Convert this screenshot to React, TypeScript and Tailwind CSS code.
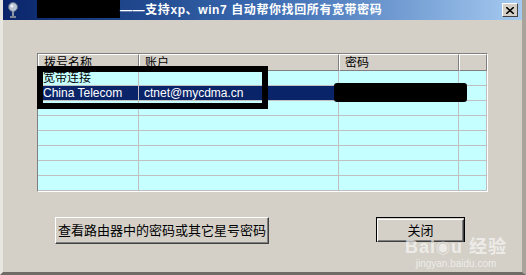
import React from 'react';

const font = { fontFamily: '"Liberation Sans", "Noto Sans CJK SC", sans-serif' };

const cols = ['w-[101px]', 'w-[200px]', 'w-[120px]', 'flex-1'];

const rows: { cells: string[]; selected?: boolean }[] = [
  { cells: ['宽带连接', '', '', ''] },
  { cells: ['China Telecom', 'ctnet@mycdma.cn', '', ''], selected: true },
  { cells: ['', '', '', ''] },
  { cells: ['', '', '', ''] },
  { cells: ['', '', '', ''] },
  { cells: ['', '', '', ''] },
  { cells: ['', '', '', ''] },
  { cells: ['', '', '', ''] },
];

export default function App() {
  return (
    <div className="relative w-[526px] h-[275px] overflow-hidden bg-[#d4d0c8] flex flex-col border-l-[3px] border-l-[#e8e6e0] border-r-[4px] border-r-[#a8a49c] border-b-[3px] border-b-[#6f6c66]" style={font}>
      {/* Title bar */}
      <div className="relative h-[20px] flex items-center bg-gradient-to-r from-[#0a246a] via-[#3a6ab0] to-[#a6caf0] pl-[3px] pr-[3px]">
        <svg width="14" height="16" viewBox="0 0 14 16" className="shrink-0">
          <circle cx="7" cy="5" r="4.5" fill="#b8c4d4" stroke="#5a6a80" strokeWidth="1" />
          <circle cx="6" cy="4" r="1.5" fill="#eef2f8" />
          <rect x="6" y="9" width="2" height="6" fill="#8a96a8" />
          <rect x="4" y="14" width="6" height="2" fill="#7a8698" />
        </svg>
        <div className="w-[83px] h-[18px] ml-[17px] mt-[-2px] bg-black shrink-0" />
        <span className="text-white font-bold text-[12px] leading-none tracking-[0.6px] whitespace-nowrap">——支持xp、win7 自动帮你找回所有宽带密码</span>
        <div className="ml-auto w-[16px] h-[14px] bg-[#d4d0c8] border border-t-white border-l-white border-r-[#404040] border-b-[#404040] flex items-center justify-center mr-[1px]">
          <svg width="8" height="7" viewBox="0 0 8 7">
            <path d="M0 0 L8 7 M8 0 L0 7" stroke="black" strokeWidth="1.6" />
          </svg>
        </div>
      </div>

      {/* Body */}
      <div className="relative flex-1 flex flex-col pl-[34px] pr-[34px] pt-[33px]">
        {/* List view */}
        <div className="w-[451px] h-[139px] border border-t-[#808080] border-l-[#808080] border-r-white border-b-white bg-[#c6ffff] flex flex-col overflow-hidden">
          <div className="flex h-[17px] shrink-0">
            {['拨号名称', '账户', '密码', ''].map((h, i) => (
              <div key={i} className={`${cols[i]} h-full bg-[#d4d0c8] border-t border-l border-t-white border-l-white border-r border-b border-r-[#808080] border-b-[#808080] text-[12px] leading-[16px] pl-[5px] text-black`}>
                {h}
              </div>
            ))}
          </div>
          {rows.map((r, ri) => (
            <div key={ri} className="flex h-[15px] shrink-0">
              {r.cells.map((c, ci) => (
                <div
                  key={ci}
                  className={`${cols[ci]} h-full border-r border-b border-[#c0c0c0] text-[12px] leading-[14px] pl-[5px] whitespace-nowrap ${
                    r.selected && ci < 3 ? 'bg-[#0a246a] text-white' : 'text-black'
                  }`}
                >
                  {c}
                </div>
              ))}
            </div>
          ))}
        </div>

        {/* Buttons */}
        <div className="flex items-start mt-[25px] pl-[18px]">
          <button className="w-[214px] h-[27px] bg-[#d4d0c8] border border-t-white border-l-white border-r-[#404040] border-b-[#404040] shadow-[inset_-1px_-1px_0_#808080] text-[13px] text-black">
            查看路由器中的密码或其它星号密码
          </button>
          <div className="ml-[107px] w-[89px] h-[25px] border border-black">
            <button className="w-full h-full bg-[#d4d0c8] border border-t-white border-l-white border-r-[#404040] border-b-[#404040] shadow-[inset_-1px_-1px_0_#808080] text-[13px] text-black">
              关闭
            </button>
          </div>
        </div>

        {/* Annotation box around names/accounts */}
        <div className="absolute left-[34px] top-[46px] w-[231px] h-[43px] border-[6px] border-black" />
        {/* Password redaction */}
        <div className="absolute left-[331px] top-[63px] w-[133px] h-[19px] rounded-[3px] bg-black" />

        {/* Watermark */}
        <div className="absolute left-[402px] top-[218px] flex flex-col items-center text-white/60 pointer-events-none">
          <span className="text-[18px] font-bold leading-none tracking-[1px]">Bai<span className="text-[14px]">◉</span>u 经验</span>
          <span className="text-[10px] leading-none mt-[3px]">jingyan.baidu.com</span>
        </div>
      </div>
    </div>
  );
}
